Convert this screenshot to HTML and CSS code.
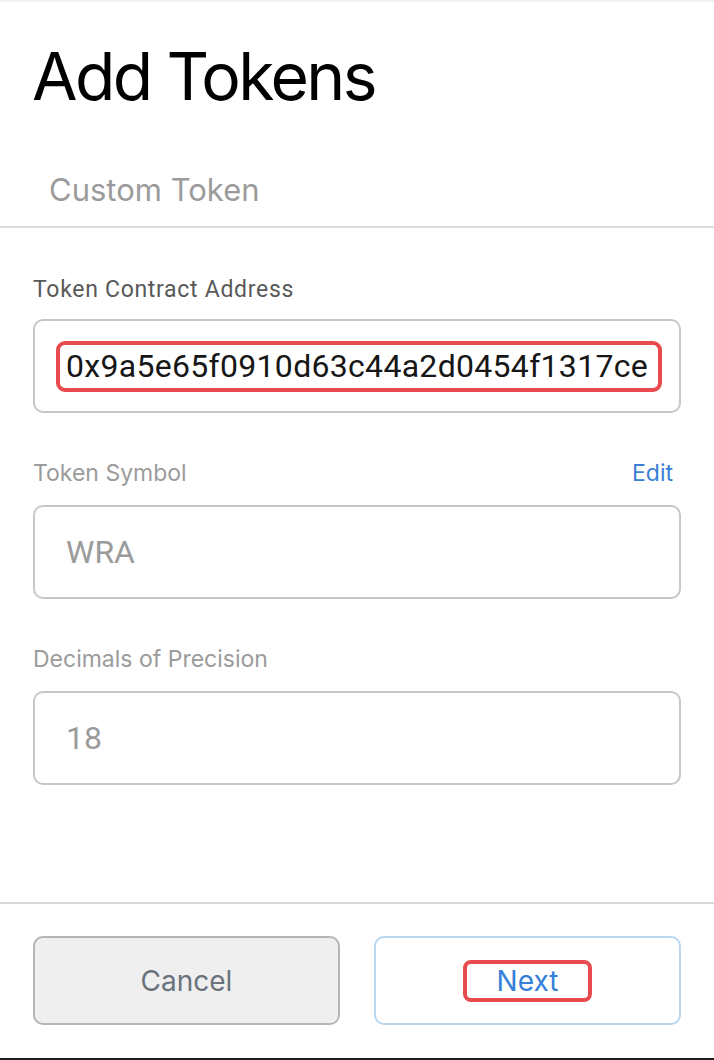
FILE: index.html
```html
<!DOCTYPE html>
<html lang="en">
<head>
<meta charset="utf-8">
<title>Add Tokens</title>
<link rel="stylesheet" href="styles.css">
</head>
<body>
<div class="page">
  <div class="top-strip"></div>
  <header class="header">
    <h1 class="title">Add Tokens</h1>
  </header>
  <nav class="tabs">
    <div class="tab">Custom Token</div>
  </nav>
  <main class="form">
    <div class="field field-first">
      <div class="label-row"><label class="label label-dark">Token Contract Address</label></div>
      <div class="input">
        <span class="highlight highlight-address">0x9a5e65f0910d63c44a2d0454f1317ce</span>
      </div>
    </div>
    <div class="field">
      <div class="label-row"><label class="label">Token Symbol</label><span class="edit">Edit</span></div>
      <div class="input input-plain"><span class="value">WRA</span></div>
    </div>
    <div class="field">
      <div class="label-row"><label class="label">Decimals of Precision</label></div>
      <div class="input input-plain"><span class="value">18</span></div>
    </div>
  </main>
  <footer class="footer">
    <button class="btn btn-cancel">Cancel</button>
    <button class="btn btn-next"><span class="highlight highlight-next">Next</span></button>
  </footer>
  <div class="bottom-strip"></div>
</div>
</body>
</html>
```
FILE: styles.css
```css
* { box-sizing: border-box; }
html, body { margin: 0; padding: 0; background: #ffffff; }
body { font-family: "Inter", "Liberation Sans", sans-serif; }

.page {
  width: 714px;
  height: 1060px;
  display: flex;
  flex-direction: column;
}

.top-strip { height: 2px; background: #f0f1f2; flex: none; }

.header { padding: 34px 0 0 32px; flex: none; }
.title {
  margin: 0;
  font-family: "Inter", sans-serif;
  font-weight: 400;
  font-size: 66px;
  line-height: 80px;
  letter-spacing: -2.6px;
  color: #000000;
}

.tabs {
  flex: none;
  padding: 54px 0 16px 49px;
  border-bottom: 2px solid #dcdfe2;
}
.tab {
  font-family: "Inter", sans-serif;
  font-size: 31px;
  line-height: 40px;
  color: #9b9b9b;
}

.form {
  flex: 1;
  padding: 0 33px;
}
.field { margin-top: 47px; }
.field-first { margin-top: 49px; }

.label-row {
  display: flex;
  justify-content: space-between;
  align-items: baseline;
  height: 26px;
  margin-bottom: 19px;
}
.field-first .label-row { margin-bottom: 16px; }

.label {
  font-family: "Inter", sans-serif;
  font-size: 23px;
  line-height: 26px;
  color: #9b9b9b;
}
.label-dark {
  font-family: "Roboto", sans-serif;
  font-size: 23px;
  letter-spacing: 0.7px;
  color: #595959;
}
.edit {
  font-family: "Inter", sans-serif;
  font-size: 23px;
  line-height: 26px;
  color: #3a7fd6;
  margin-right: 8px;
}

.input {
  height: 94px;
  border: 2px solid #c4c8cc;
  border-radius: 10px;
  display: flex;
  align-items: center;
  padding-left: 21px;
}
.input-plain { padding-left: 31px; }

.value {
  font-family: "Roboto", sans-serif;
  font-size: 32px;
  color: #9b9b9b;
}

.highlight {
  display: inline-flex;
  align-items: center;
  border: 4px solid #e84b4d;
  border-radius: 9px;
}
.highlight-address {
  height: 51px;
  width: 606px;
  padding-left: 6px;
  font-family: "Roboto", sans-serif;
  font-size: 32px;
  letter-spacing: 0.3px;
  color: #161616;
  white-space: nowrap;
  overflow: hidden;
}

.footer {
  flex: none;
  border-top: 2px solid #d6d9dc;
  padding: 32px 33px 33px;
  display: flex;
  gap: 34px;
}
.btn {
  flex: 1;
  height: 89px;
  border-radius: 10px;
  font-family: "Inter", sans-serif;
  font-size: 28px;
  display: flex;
  align-items: center;
  justify-content: center;
  padding: 0;
  margin: 0;
}
.btn-cancel {
  background: #efefef;
  border: 2px solid #b5b5b5;
  color: #6a737d;
}
.btn-next {
  background: #ffffff;
  border: 2px solid #b9d7f1;
  color: #3480d8;
}
.highlight-next {
  width: 129px;
  height: 42px;
  justify-content: center;
  border-radius: 8px;
}

.bottom-strip { height: 2px; background: #1f1f22; flex: none; }
```
